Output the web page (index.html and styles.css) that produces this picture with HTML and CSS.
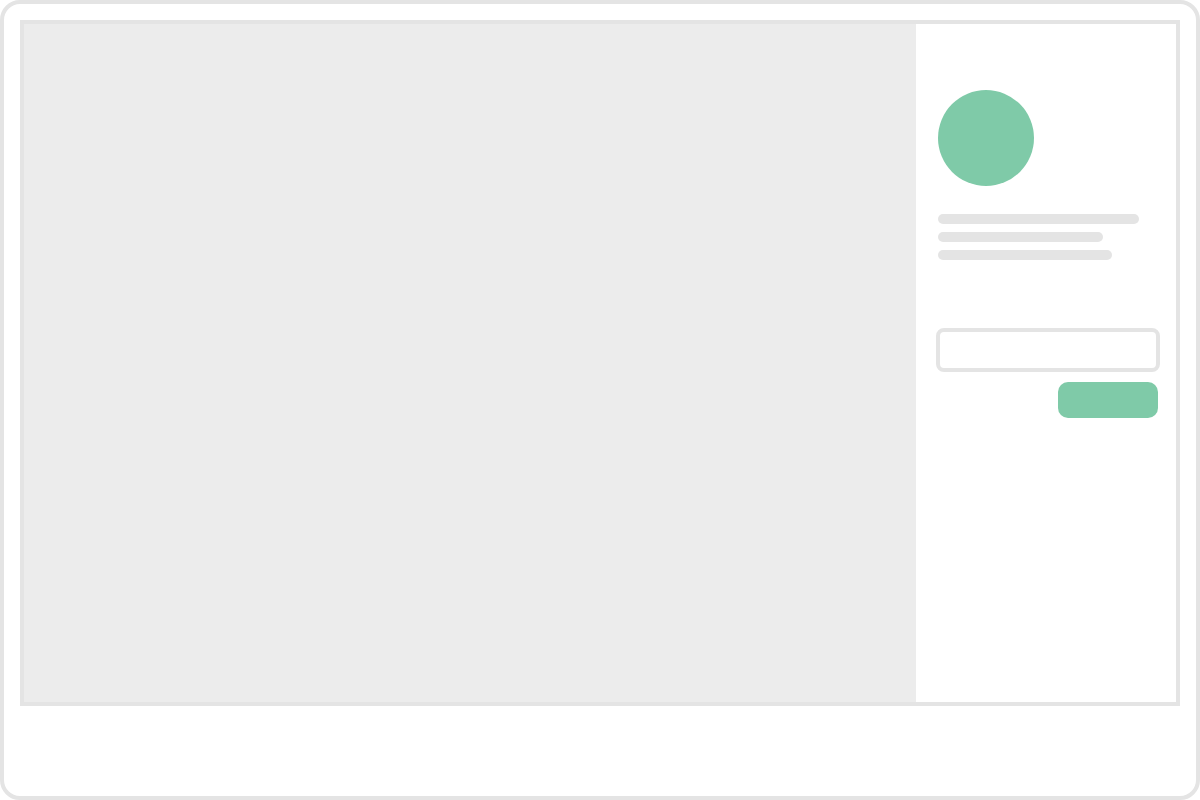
FILE: index.html
```html
<!DOCTYPE html>
<html lang="en">
<head>
    <meta charset="UTF-8">
    <meta name="viewport" content="width=device-width, initial-scale=1.0">
    <title>Profile Wireframe</title>
    <link rel="stylesheet" href="styles.css">
</head>
<body>
    <div class="window">
        <div class="frame">
            <div class="main-area"></div>
            <div class="sidebar">
                <div class="avatar"></div>
                <div class="text-lines">
                    <div class="text-line line-long"></div>
                    <div class="text-line line-short"></div>
                    <div class="text-line line-medium"></div>
                </div>
                <div class="input-box"></div>
                <div class="submit-btn"></div>
            </div>
        </div>
    </div>
</body>
</html>
```

FILE: styles.css
```css
* {
    margin: 0;
    padding: 0;
    box-sizing: border-box;
}

body {
    background: #fff;
}

.window {
    height: 800px;
    padding: 16px;
    border: 4px solid #e4e4e4;
    border-radius: 20px;
}

.frame {
    display: flex;
    height: 686px;
    border: 4px solid #e4e4e4;
}

.main-area {
    flex: 1;
    background: #ececec;
}

.sidebar {
    display: flex;
    flex-direction: column;
    width: 260px;
    padding: 66px 18px 0 22px;
    background: #fff;
}

.avatar {
    width: 96px;
    height: 96px;
    border-radius: 50%;
    background: #7fcaa8;
}

.text-lines {
    display: flex;
    flex-direction: column;
    gap: 8px;
    margin-top: 28px;
}

.text-line {
    height: 10px;
    border-radius: 5px;
    background: #e4e4e4;
}

.line-long { width: 201px; }
.line-short { width: 165px; }
.line-medium { width: 174px; }

.input-box {
    height: 44px;
    margin: 68px -2px 0;
    border: 4px solid #e4e4e4;
    border-radius: 8px;
}

.submit-btn {
    align-self: flex-end;
    width: 100px;
    height: 36px;
    margin-top: 10px;
    border-radius: 10px;
    background: #7fcaa8;
}
```
